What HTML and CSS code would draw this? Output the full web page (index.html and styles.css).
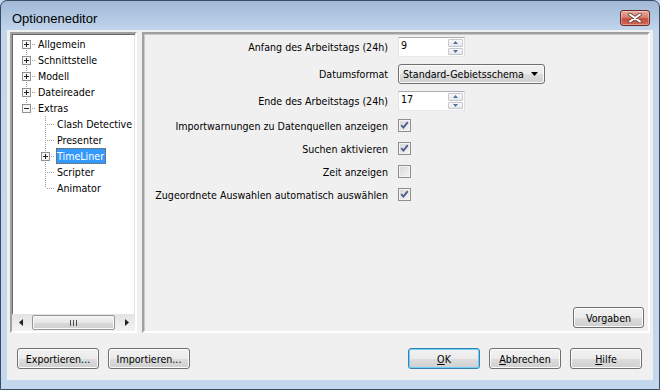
FILE: index.html
```html
<!DOCTYPE html>
<html lang="de">
<head>
  <meta charset="UTF-8">
  <title>Optioneneditor</title>
  <link rel="stylesheet" href="styles.css">
</head>
<body>
  <div class="window">
    <div class="titlebar">
      <span class="title">Optioneneditor</span>
      <button class="close" aria-label="Schließen">
        <svg width="14" height="10" viewBox="0 0 14 10"><path d="M2 1.5L12 8.5M12 1.5L2 8.5" stroke="#6b4742" stroke-width="3.6" stroke-linecap="round"/><path d="M2 1.5L12 8.5M12 1.5L2 8.5" stroke="#fff" stroke-width="2" stroke-linecap="round"/></svg>
      </button>
    </div>

    <div class="client">
      <div class="main">
        <div class="tree">
          <ul class="nodes">
            <li><span class="g vb h"><svg class="box" width="9" height="9" viewBox="0 0 9 9"><rect x=".5" y=".5" width="8" height="8" fill="#f7f7f7" stroke="#919191"/><path d="M2 4.5h5M4.5 2v5" stroke="#222"/></svg></span><span class="lbl">Allgemein</span></li>
            <li><span class="g v h"><svg class="box" width="9" height="9" viewBox="0 0 9 9"><rect x=".5" y=".5" width="8" height="8" fill="#f7f7f7" stroke="#919191"/><path d="M2 4.5h5M4.5 2v5" stroke="#222"/></svg></span><span class="lbl">Schnittstelle</span></li>
            <li><span class="g v h"><svg class="box" width="9" height="9" viewBox="0 0 9 9"><rect x=".5" y=".5" width="8" height="8" fill="#f7f7f7" stroke="#919191"/><path d="M2 4.5h5M4.5 2v5" stroke="#222"/></svg></span><span class="lbl">Modell</span></li>
            <li><span class="g v h"><svg class="box" width="9" height="9" viewBox="0 0 9 9"><rect x=".5" y=".5" width="8" height="8" fill="#f7f7f7" stroke="#919191"/><path d="M2 4.5h5M4.5 2v5" stroke="#222"/></svg></span><span class="lbl">Dateireader</span></li>
            <li><span class="g vt h"><svg class="box" width="9" height="9" viewBox="0 0 9 9"><rect x=".5" y=".5" width="8" height="8" fill="#f7f7f7" stroke="#919191"/><path d="M2 4.5h5" stroke="#222"/></svg></span><span class="lbl">Extras</span></li>
            <li><span class="g"></span><span class="g v h"></span><span class="lbl">Clash Detective</span></li>
            <li><span class="g"></span><span class="g v h"></span><span class="lbl">Presenter</span></li>
            <li><span class="g"></span><span class="g v h"><svg class="box" width="9" height="9" viewBox="0 0 9 9"><rect x=".5" y=".5" width="8" height="8" fill="#f7f7f7" stroke="#919191"/><path d="M2 4.5h5M4.5 2v5" stroke="#222"/></svg></span><span class="lbl selected">TimeLiner</span></li>
            <li><span class="g"></span><span class="g v h"></span><span class="lbl">Scripter</span></li>
            <li><span class="g"></span><span class="g vt h"></span><span class="lbl">Animator</span></li>
          </ul>
          <div class="hscroll">
            <span class="arrow"><svg width="4" height="7" viewBox="0 0 4 7"><path d="M4 0V7L0 3.5Z" fill="#222"/></svg></span>
            <span class="track">
              <span class="thumb"><svg width="7" height="6" viewBox="0 0 7 6"><path d="M.5 0v6M3.5 0v6M6.5 0v6" stroke="#4d4d4d"/></svg></span>
            </span>
            <span class="arrow"><svg width="4" height="7" viewBox="0 0 4 7"><path d="M0 0V7L4 3.5Z" fill="#222"/></svg></span>
          </div>
        </div>

        <div class="panel">
          <div class="form">
            <div class="row field">
              <label class="caption">Anfang des Arbeitstags (24h)</label>
              <div class="spin">
                <span class="value">9</span>
                <span class="spin-btns">
                  <span class="sb"><svg width="5" height="3" viewBox="0 0 5 3"><path d="M0 3L2.5 0L5 3Z" fill="#4f6fa3"/></svg></span>
                  <span class="sb"><svg width="5" height="3" viewBox="0 0 5 3"><path d="M0 0L2.5 3L5 0Z" fill="#4f6fa3"/></svg></span>
                </span>
              </div>
            </div>
            <div class="row field">
              <label class="caption">Datumsformat</label>
              <div class="select">
                <span>Standard-Gebietsschema</span>
                <svg width="7" height="4" viewBox="0 0 7 4"><path d="M0 0H7L3.5 4Z" fill="#000"/></svg>
              </div>
            </div>
            <div class="row field">
              <label class="caption">Ende des Arbeitstags (24h)</label>
              <div class="spin">
                <span class="value">17</span>
                <span class="spin-btns">
                  <span class="sb"><svg width="5" height="3" viewBox="0 0 5 3"><path d="M0 3L2.5 0L5 3Z" fill="#4f6fa3"/></svg></span>
                  <span class="sb"><svg width="5" height="3" viewBox="0 0 5 3"><path d="M0 0L2.5 3L5 0Z" fill="#4f6fa3"/></svg></span>
                </span>
              </div>
            </div>
            <div class="row check first">
              <label class="caption">Importwarnungen zu Datenquellen anzeigen</label>
              <span class="cb on"></span>
            </div>
            <div class="row check">
              <label class="caption">Suchen aktivieren</label>
              <span class="cb on"></span>
            </div>
            <div class="row check">
              <label class="caption">Zeit anzeigen</label>
              <span class="cb"></span>
            </div>
            <div class="row check">
              <label class="caption">Zugeordnete Auswahlen automatisch auswählen</label>
              <span class="cb on"></span>
            </div>
          </div>
          <div class="panel-foot">
            <button class="btn">Vorgaben</button>
          </div>
        </div>
      </div>

      <div class="actions">
        <button class="btn">Exportieren...</button>
        <button class="btn">Importieren...</button>
        <span class="spacer"></span>
        <button class="btn default"><u>O</u>K</button>
        <button class="btn"><u>A</u>bbrechen</button>
        <button class="btn"><u>H</u>ilfe</button>
      </div>
    </div>
  </div>
</body>
</html>
```

FILE: styles.css
```css
* { margin: 0; padding: 0; box-sizing: border-box; }
body {
  font: 10.6px "DejaVu Sans Condensed", "Liberation Sans", Arial, sans-serif;
  color: #000;
  background: #c4d7ed;
}
.window {
  width: 660px;
  height: 390px;
  border: 1px solid #3a4b62;
  border-radius: 7px 7px 0 0;
  background: linear-gradient(to bottom, #a0b9d7 0, #b4cae4 18px, #c3d6ec 30px, #c3d7ed 100%);
  display: flex;
  flex-direction: column;
}
.titlebar {
  height: 29px;
  padding: 5px 9px 0 11px;
  display: flex;
  align-items: center;
}
.title {
  flex: 1;
  font: 13px "Liberation Sans", Arial, sans-serif;
  color: #000;
}
.close {
  width: 30px;
  height: 16px;
  border: 1px solid #6a2c24;
  border-radius: 3px;
  background: linear-gradient(to bottom, #e5a89b 0, #d68373 45%, #c4503f 55%, #d16552 100%);
  box-shadow: inset 0 0 0 1px rgba(255,255,255,0.35);
  display: flex;
  align-items: center;
  justify-content: center;
}
.client {
  flex: 1;
  margin: 0 6px 9px 6px;
  background: #f0f0f0;
  padding: 2px 3px 0 3px;
  display: flex;
  flex-direction: column;
}
.main {
  height: 301px;
  display: flex;
  gap: 5px;
}

/* tree */
.tree {
  width: 127px;
  border-style: solid;
  border-width: 2px;
  border-color: #a0a0a0 #fff #fff #a0a0a0;
  box-shadow: inset 1px 1px 0 #696969, inset -1px -1px 0 #e3e3e3;
  background: #fff;
  display: flex;
  flex-direction: column;
}
.nodes {
  flex: 1;
  list-style: none;
  padding: 2px 0 0 5px;
}
.nodes li {
  height: 16px;
  line-height: 16px;
  display: flex;
  white-space: nowrap;
}
.g {
  width: 19px;
  height: 16px;
  flex: none;
  position: relative;
}
.g::before, .g::after {
  content: "";
  position: absolute;
  display: none;
}
.g.v::before, .g.vt::before, .g.vb::before {
  display: block;
  left: 9px;
  width: 1px;
  top: 0;
  height: 16px;
  background: repeating-linear-gradient(to bottom, #a0a0a0 0 1px, transparent 1px 2px);
}
.g.vt::before { height: 8px; }
.g.vb::before { top: 8px; height: 8px; }
.g.h::after {
  display: block;
  left: 10px;
  top: 8px;
  width: 9px;
  height: 1px;
  background: repeating-linear-gradient(to right, transparent 0 1px, #a0a0a0 1px 2px);
}
.box {
  position: relative;
  z-index: 1;
  display: block;
  margin: 4px 0 0 5px;
}
.lbl {
  margin-left: 1px;
  padding: 0 1px;
  height: 16px;
}
.lbl.selected {
  background: #3399ff;
  color: #fff;
  outline: 1px dotted #8a5a20;
  outline-offset: -1px;
  padding: 0 2px 0 1px;
}
.hscroll {
  height: 17px;
  display: flex;
  background: linear-gradient(to bottom, #e3e3e3, #f3f3f3);
}
.hscroll .arrow {
  width: 17px;
  display: flex;
  align-items: center;
  justify-content: center;
}
.hscroll .track {
  flex: 1;
  display: flex;
  padding: 1px 3px;
}
.thumb {
  flex: 1;
  border: 1px solid #979797;
  border-radius: 2px;
  background: linear-gradient(to bottom, #f5f5f5, #e6e6e6 50%, #d9d9d9 51%, #cfcfcf);
  box-shadow: inset 0 0 0 1px #f8f8f8;
  display: flex;
  align-items: center;
  justify-content: center;
}

/* right panel */
.panel {
  flex: 1;
  border-style: solid;
  border-width: 2px;
  border-color: #a0a0a0 #fff #fff #a0a0a0;
  box-shadow: inset 1px 1px 0 #c8c8c8;
  display: flex;
  flex-direction: column;
}
.form {
  flex: 1;
  padding-top: 3px;
}
.row {
  display: flex;
  align-items: center;
  gap: 10px;
}
.row.field { height: 20px; margin-bottom: 7px; }
.row.check { height: 23px; }
.row.check.first { margin-top: -4px; }
.caption {
  width: 244px;
  text-align: right;
  white-space: nowrap;
}
.spin {
  width: 67px;
  height: 20px;
  border: 1px solid #abadb3;
  border-color: #abadb3 #dbdfe6 #e3e9ef #e2e3ea;
  background: #fff;
  display: flex;
}
.spin .value {
  flex: 1;
  padding: 1px 0 0 2px;
}
.spin-btns {
  width: 16px;
  display: flex;
  flex-direction: column;
  gap: 1px;
  padding: 1px 1px 1px 0;
}
.sb {
  flex: 1;
  border: 1px solid #c5c8cd;
  border-radius: 1px;
  background: linear-gradient(to bottom, #f9f9f9, #e8e8e8);
  display: flex;
  align-items: center;
  justify-content: center;
}
.select {
  width: 147px;
  height: 20px;
  border: 1px solid #707070;
  border-radius: 3px;
  background: linear-gradient(to bottom, #f2f2f2 0, #ebebeb 50%, #dddddd 51%, #cfcfcf 100%);
  box-shadow: inset 0 0 0 1px #fbfbfb;
  padding: 0 6px 0 4px;
  display: flex;
  align-items: center;
  justify-content: space-between;
}
.cb {
  width: 13px;
  height: 13px;
  border: 1px solid #8e8f8f;
  background: linear-gradient(135deg, #d6d6d6, #f6f6f6);
  box-shadow: inset 0 0 0 1px #f4f4f4;
}
.cb.on {
  background:
    url("data:image/svg+xml;utf8,<svg xmlns='http://www.w3.org/2000/svg' width='11' height='11' viewBox='0 0 11 11'><path d='M2.2 5.2L4.4 7.6L8.8 2.2' fill='none' stroke='%234a5f8e' stroke-width='1.9'/></svg>") center / 11px 11px no-repeat,
    linear-gradient(135deg, #d6d6d6, #f6f6f6);
}
.panel-foot {
  display: flex;
  justify-content: flex-end;
  padding: 0 4px 3px 0;
}

/* buttons */
.btn {
  font: 10.6px "DejaVu Sans Condensed", "Liberation Sans", Arial, sans-serif;
  color: #000;
  height: 21px;
  border: 1px solid #707070;
  border-radius: 3px;
  background: linear-gradient(to bottom, #f2f2f2 0, #ebebeb 50%, #dddddd 51%, #cfcfcf 100%);
  box-shadow: inset 0 0 0 1px #fcfcfc;
  width: 71px;
}
.btn.default {
  border-color: #3c7fb1;
  box-shadow: inset 0 0 0 1px #6fd0fb;
  width: 72px;
}
.btn u { text-decoration: underline; }
.actions {
  display: flex;
  gap: 9px;
  padding: 15px 8px 0 7px;
}
.actions .btn { width: 72px; }
.actions .btn:nth-child(1), .actions .btn:nth-child(2) { width: 82px; }
.spacer { flex: 1; }
```
